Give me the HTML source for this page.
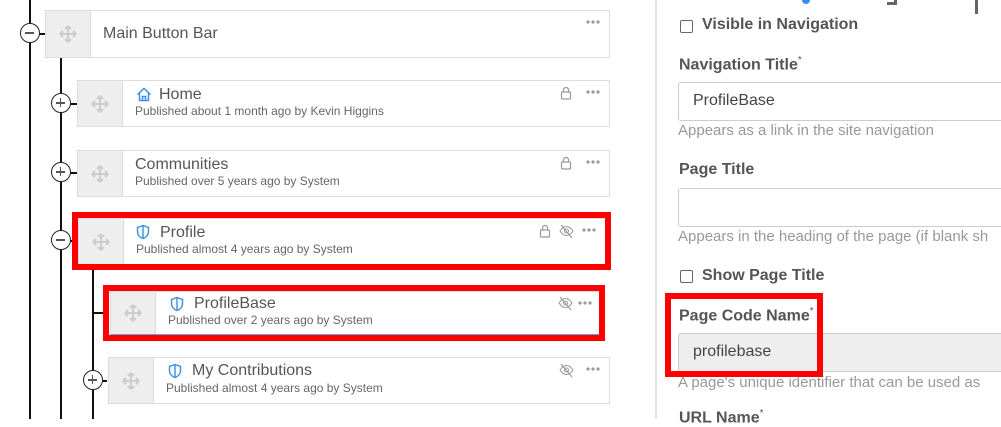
<!DOCTYPE html>
<html><head><style>
*{box-sizing:border-box;margin:0;padding:0}
body{width:1001px;height:419px;overflow:hidden;background:#fff;font-family:"Liberation Sans",sans-serif;position:relative;color:#555}
.a{position:absolute}
.vl{position:absolute;width:2px;background:#111}
.hl{position:absolute;height:2px;background:#111}
.card{position:absolute;border:1px solid #ddd;background:#fff}
.hd{position:absolute;left:0;top:0;bottom:0;width:45px;background:#eee;border-right:1px solid #ddd}
.hd svg{position:absolute;left:12px;top:50%;margin-top:-10px}
.t{position:absolute;font-size:16px;color:#555;white-space:nowrap}
.s{position:absolute;font-size:12px;color:#666;white-space:nowrap}
.dots{position:absolute;right:9px;top:9px}
.circ{position:absolute;width:20px;height:20px;border:1.5px solid #222;border-radius:50%;background:#fff}
.circ:before{content:"";position:absolute;left:4px;top:8px;width:9px;height:1.5px;background:#555}
.circ.p:after{content:"";position:absolute;left:7.8px;top:4px;width:1.5px;height:9px;background:#555}
.red{position:absolute;border:6px solid #f00}
.lbl{position:absolute;font-size:16px;font-weight:bold;color:#555;white-space:nowrap}
.lbl sup{font-size:10px;font-weight:normal}
.inp{position:absolute;left:678px;width:340px;border:1px solid #ccc;border-radius:3px;height:39px;font-size:16px;color:#444;padding:9px 14px}
.help{position:absolute;left:678px;font-size:15px;color:#999;white-space:nowrap}
.cb{position:absolute;width:13px;height:13px;border:1px solid #666;border-radius:2px}
</style></head><body>
<svg width="0" height="0" style="position:absolute"><defs>
<g id="mv"><path d="M10 2v16M2 10h16M10 2l-3 3M10 2l3 3M10 18l-3-3M10 18l3-3M2 10l3-3M2 10l3 3M18 10l-3-3M18 10l-3 3" stroke="#ccc" stroke-width="2" fill="none"/></g>
<g id="sh"><path d="M7 1.5L1.5 3.5v4c0 3.5 2.5 6 5.5 7 3-1 5.5-3.5 5.5-7v-4z M7 1.5v13" stroke="#3a8ee6" stroke-width="1.4" fill="none"/></g>
<g id="lk"><rect x="1.5" y="6" width="9" height="7" rx="1" stroke="#999" stroke-width="1.2" fill="none"/><path d="M3.5 6V4a2.5 2.5 0 0 1 5 0v2" stroke="#999" stroke-width="1.2" fill="none"/></g>
<g id="ey"><path d="M1 7c2-3 4-4.5 6.5-4.5S12 4 14 7c-2 3-4 4.5-6.5 4.5S3 10 1 7z" stroke="#999" stroke-width="1.1" fill="none"/><circle cx="7.5" cy="7" r="2" stroke="#999" stroke-width="1" fill="none"/><path d="M2 1l11 13" stroke="#999" stroke-width="1.1"/></g>
<g id="dt"><circle cx="2" cy="2" r="1.6" fill="#999"/><circle cx="7" cy="2" r="1.6" fill="#999"/><circle cx="12" cy="2" r="1.6" fill="#999"/></g>
</defs></svg>

<!-- tree lines -->
<div class="vl" style="left:29px;top:0;height:419px"></div>
<div class="vl" style="left:60px;top:57px;height:362px"></div>
<div class="vl" style="left:92px;top:268px;height:151px"></div>
<div class="hl" style="left:30px;top:33px;width:16px"></div>
<div class="hl" style="left:61px;top:103px;width:16px"></div>
<div class="hl" style="left:61px;top:172px;width:16px"></div>
<div class="hl" style="left:61px;top:240px;width:16px"></div>
<div class="hl" style="left:93px;top:312px;width:14px"></div>
<div class="hl" style="left:93px;top:380px;width:14px"></div>

<div class="card" style="left:45px;top:10px;width:565px;height:48px"><div class="hd"><svg width="20" height="20"><use href="#mv"/></svg></div><div class="t" style="left:57px;top:14px">Main Button Bar</div><svg class="dots" width="14" height="4"><use href="#dt"/></svg></div>
<div class="circ" style="left:20px;top:23px"></div>

<div class="card" style="left:77px;top:80px;width:533px;height:47px"><div class="hd"><svg width="20" height="20"><use href="#mv"/></svg></div>
<svg class="a" style="left:58px;top:6px" width="16" height="15"><path d="M1.5 7.5L8 1.5l6.5 6M3.5 6v7.5h9V6M6.5 13.5V9.5h3v4" stroke="#3a8ee6" stroke-width="1.5" fill="none"/></svg>
<div class="t" style="left:81px;top:5px">Home</div><div class="s" style="left:57px;top:23px">Published about 1 month ago by Kevin Higgins</div>
<svg class="a" style="left:482px;top:5px" width="12" height="14"><use href="#lk"/></svg><svg class="dots" width="14" height="4"><use href="#dt"/></svg></div>
<div class="circ p" style="left:51px;top:93px"></div>

<div class="card" style="left:77px;top:150px;width:533px;height:47px"><div class="hd"><svg width="20" height="20"><use href="#mv"/></svg></div>
<div class="t" style="left:57px;top:5px">Communities</div><div class="s" style="left:57px;top:23px">Published over 5 years ago by System</div>
<svg class="a" style="left:482px;top:5px" width="12" height="14"><use href="#lk"/></svg><svg class="dots" width="14" height="4"><use href="#dt"/></svg></div>
<div class="circ p" style="left:51px;top:162px"></div>

<div class="card" style="left:78px;top:218px;width:528px;height:47px"><div class="hd"><svg width="20" height="20"><use href="#mv"/></svg></div>
<svg class="a" style="left:57px;top:5px" width="14" height="16"><use href="#sh"/></svg>
<div class="t" style="left:81px;top:5px">Profile</div><div class="s" style="left:57px;top:23px">Published almost 4 years ago by System</div>
<svg class="a" style="left:460px;top:5px" width="12" height="14"><use href="#lk"/></svg>
<svg class="a" style="left:480px;top:5px" width="15" height="15"><use href="#ey"/></svg><svg class="dots" width="14" height="4"><use href="#dt"/></svg></div>
<div class="red" style="left:72px;top:212px;width:539px;height:58px"></div>
<div class="circ" style="left:51px;top:230px"></div>

<div class="card" style="left:110px;top:291px;width:492px;height:44px;border-bottom:1px solid #6a9fd8"><div class="hd"><svg width="20" height="20"><use href="#mv"/></svg></div>
<svg class="a" style="left:59px;top:4px" width="14" height="16"><use href="#sh"/></svg>
<div class="t" style="left:83px;top:3px">ProfileBase</div><div class="s" style="left:57px;top:21px">Published over 2 years ago by System</div>
<svg class="a" style="left:447px;top:4px" width="15" height="15"><use href="#ey"/></svg><svg class="dots" width="14" height="4"><use href="#dt"/></svg></div>
<div class="red" style="left:103px;top:285px;width:502px;height:56px"></div>

<div class="card" style="left:108px;top:357px;width:502px;height:47px"><div class="hd"><svg width="20" height="20"><use href="#mv"/></svg></div>
<svg class="a" style="left:59px;top:5px" width="14" height="16"><use href="#sh"/></svg>
<div class="t" style="left:83px;top:4px">My Contributions</div><div class="s" style="left:57px;top:23px">Published almost 4 years ago by System</div>
<svg class="a" style="left:450px;top:5px" width="15" height="15"><use href="#ey"/></svg><svg class="dots" width="14" height="4"><use href="#dt"/></svg></div>
<div class="circ p" style="left:83px;top:370px"></div>

<!-- divider -->
<div class="a" style="left:655px;top:0;width:2px;height:419px;background:#e3e3e3"></div>

<!-- right form: cut-off heading -->
<div class="a" style="left:802px;top:-4px;width:8px;height:8px;border-radius:50%;background:#3a8ee6"></div>
<div class="a" style="left:887px;top:0;width:10px;height:5px;border-bottom:3px solid #666;border-right:3px solid #666"></div>
<div class="a" style="left:975px;top:0;width:3px;height:14px;background:#666"></div>
<div class="cb" style="left:680px;top:20px"></div>
<div class="lbl" style="left:702px;top:16px">Visible in Navigation</div>
<div class="lbl" style="left:679px;top:55px">Navigation Title<sup>*</sup></div>
<div class="inp" style="top:82px">ProfileBase</div>
<div class="help" style="top:122px">Appears as a link in the site navigation</div>
<div class="lbl" style="left:679px;top:161px">Page Title</div>
<div class="inp" style="top:188px"></div>
<div class="help" style="top:228px">Appears in the heading of the page (if blank sh</div>
<div class="cb" style="left:680px;top:270px"></div>
<div class="lbl" style="left:702px;top:267px">Show Page Title</div>
<div class="lbl" style="left:679px;top:306px">Page Code Name<sup>*</sup></div>
<div class="inp" style="top:333px;background:#eee">profilebase</div>
<div class="help" style="top:374px">A page's unique identifier that can be used as</div>
<div class="red" style="left:665px;top:293px;width:158px;height:84px"></div>
<div class="lbl" style="left:679px;top:408px">URL Name<sup>*</sup></div>
</body></html>
